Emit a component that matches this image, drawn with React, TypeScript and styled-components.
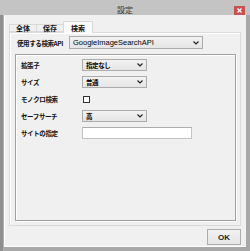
import styled, { createGlobalStyle } from 'styled-components';

const GlobalStyle = createGlobalStyle`
  html, body {
    margin: 0;
    padding: 0;
  }
  body {
    width: 250px;
    height: 251px;
    overflow: hidden;
    font-family: "Liberation Sans", "Noto Sans CJK JP", sans-serif;
  }
`;

const Arrow = () => (
  <svg width="6" height="4" viewBox="0 0 6 4">
    <path d="M0.5 0.5 L3 3 L5.5 0.5" fill="none" stroke="#222" strokeWidth="1.2" />
  </svg>
);

function Select({ value, width, height, cjk }: { value: string; width: number; height?: number; cjk?: boolean }) {
  return (
    <SelectBox $width={width} $height={height ?? 12}>
      <SelectText $cjk={cjk}>{value}</SelectText>
      <Arrow />
    </SelectBox>
  );
}

export default function App() {
  return (
    <>
      <GlobalStyle />
      <Window>
        <TitleBar>
          <span />
          <Title>設定</Title>
          <CloseButton>
            <svg width="5" height="5" viewBox="0 0 5 5">
              <path d="M0.5 0.5 L4.5 4.5 M4.5 0.5 L0.5 4.5" stroke="#fff" strokeWidth="1.2" />
            </svg>
          </CloseButton>
        </TitleBar>
        <Frame>
          <Client>
            <TabStrip>
              <Tab>全体</Tab>
              <Tab>保存</Tab>
              <Tab $active>検索</Tab>
            </TabStrip>
            <Panel>
              <ApiRow>
                <Label>使用する検索API</Label>
                <Select value="GoogleImageSearchAPI" width={134} height={13} />
              </ApiRow>
              <Group>
                <Label>拡張子</Label>
                <Select value="指定なし" width={65} cjk />
                <Label>サイズ</Label>
                <Select value="普通" width={65} cjk />
                <Label>モノクロ検索</Label>
                <Checkbox />
                <Label>セーフサーチ</Label>
                <Select value="高" width={65} cjk />
                <Label>サイトの指定</Label>
                <TextInput />
              </Group>
            </Panel>
            <Footer>
              <Button>OK</Button>
            </Footer>
          </Client>
        </Frame>
      </Window>
    </>
  );
}

const Window = styled.div`
  width: 250px;
  height: 251px;
  display: flex;
  flex-direction: column;
  background: #999999;
`;

const TitleBar = styled.div`
  height: 15px;
  display: grid;
  grid-template-columns: 1fr auto 1fr;
  align-items: center;
  background: #c4c4c4;
`;

const Title = styled.span`
  font-family: "Noto Sans CJK JP", sans-serif;
  font-size: 8px;
  color: #333;
  line-height: 15px;
  padding-top: 2px;
`;

const CloseButton = styled.div`
  justify-self: end;
  margin-right: 5px;
  margin-top: 4px;
  width: 11px;
  height: 10px;
  background: #c75050;
  display: flex;
  align-items: center;
  justify-content: center;
`;

const Frame = styled.div`
  flex: 1;
  display: flex;
  padding: 0 4px 4px 4px;
  background: linear-gradient(to right, #8f8f8f 0, #8f8f8f 3px, #b0b0b0 3px, #b0b0b0 4px, transparent 4px);
  background-color: #a8a8a8;
`;

const Client = styled.div`
  flex: 1;
  display: flex;
  flex-direction: column;
  background: #f0f0f0;
  border-left: 1px solid #fff;
  border-bottom: 1px solid #fff;
  padding: 6px 5px 1px 4px;
`;

const TabStrip = styled.div`
  height: 11px;
  display: flex;
  align-items: flex-end;
  position: relative;
  z-index: 1;
`;

const Tab = styled.div<{ $active?: boolean }>`
  box-sizing: border-box;
  height: ${p => (p.$active ? 12 : 8)}px;
  margin-bottom: ${p => (p.$active ? -1 : 0)}px;
  margin-left: ${p => (p.$active ? -1 : 0)}px;
  padding: ${p => (p.$active ? '1px 7px 0 7px' : '0 6px')};
  border: 1px solid #d9d9d9;
  border-bottom: ${p => (p.$active ? 'none' : '1px solid #d9d9d9')};
  border-left-width: ${p => (p.$active ? 1 : 0)}px;
  &:first-child {
    border-left-width: 1px;
  }
  background: ${p => (p.$active ? '#fafafa' : '#f0f0f0')};
  font-size: 7px;
  line-height: 7px;
  font-weight: bold;
  color: #111;
  font-family: "Noto Sans CJK JP", sans-serif;
  display: flex;
  align-items: center;
`;

const Panel = styled.div`
  height: 194px;
  box-sizing: border-box;
  border: 1px solid #d9d9d9;
  box-shadow: inset 1px 1px 0 #fff;
  background: #f0f0f0;
  padding: 3px 4px 4px 5px;
  display: flex;
  flex-direction: column;
`;

const ApiRow = styled.div`
  display: flex;
  align-items: center;
  padding-left: 2px;
  & > span:first-child {
    width: 52px;
  }
`;

const Label = styled.span`
  font-family: "Noto Sans CJK JP", sans-serif;
  font-size: 6.5px;
  font-weight: bold;
  letter-spacing: -0.4px;
  color: #111;
  line-height: 12px;
  white-space: nowrap;
`;

const Group = styled.div`
  flex: 1;
  margin-top: 5px;
  border: 1px solid #a0a0a0;
  box-shadow: inset 1px 1px 0 #fff, 1px 1px 0 #fff;
  padding: 4px 5px 0 5px;
  display: grid;
  grid-template-columns: 61px auto;
  grid-auto-rows: 12px;
  row-gap: 5px;
  align-items: center;
  justify-items: start;
  align-content: start;
`;

const SelectBox = styled.div<{ $width: number; $height: number }>`
  box-sizing: border-box;
  width: ${p => p.$width}px;
  height: ${p => p.$height}px;
  border: 1px solid #acacac;
  background: linear-gradient(#f2f2f2, #e5e5e5);
  display: flex;
  align-items: center;
  justify-content: space-between;
  padding: 0 3px 0 3px;
  color: #000;
`;

const SelectText = styled.span<{ $cjk?: boolean }>`
  font-family: ${p => (p.$cjk ? '"Noto Sans CJK JP", sans-serif' : '"Liberation Sans", sans-serif')};
  font-size: ${p => (p.$cjk ? 6.5 : 7.5)}px;
  font-weight: ${p => (p.$cjk ? 'bold' : 'normal')};
  letter-spacing: ${p => (p.$cjk ? -0.4 : 0)}px;
  line-height: 10px;
`;

const Checkbox = styled.div`
  box-sizing: border-box;
  width: 7px;
  height: 7px;
  margin-left: 1px;
  border: 1px solid #333;
  background: #fff;
`;

const TextInput = styled.div`
  box-sizing: border-box;
  width: 110px;
  height: 12px;
  border: 1px solid #c4c4c4;
  border-top-color: #acacac;
  background: #fff;
`;

const Footer = styled.div`
  margin-top: 3px;
  display: flex;
  justify-content: flex-end;
`;

const Button = styled.div`
  box-sizing: border-box;
  width: 34px;
  height: 16px;
  border: 1px solid #adadad;
  background: linear-gradient(#f2f2f2, #e5e5e5);
  display: flex;
  align-items: center;
  justify-content: center;
  font-family: "Liberation Sans", sans-serif;
  font-size: 8px;
  font-weight: bold;
  color: #222;
`;
